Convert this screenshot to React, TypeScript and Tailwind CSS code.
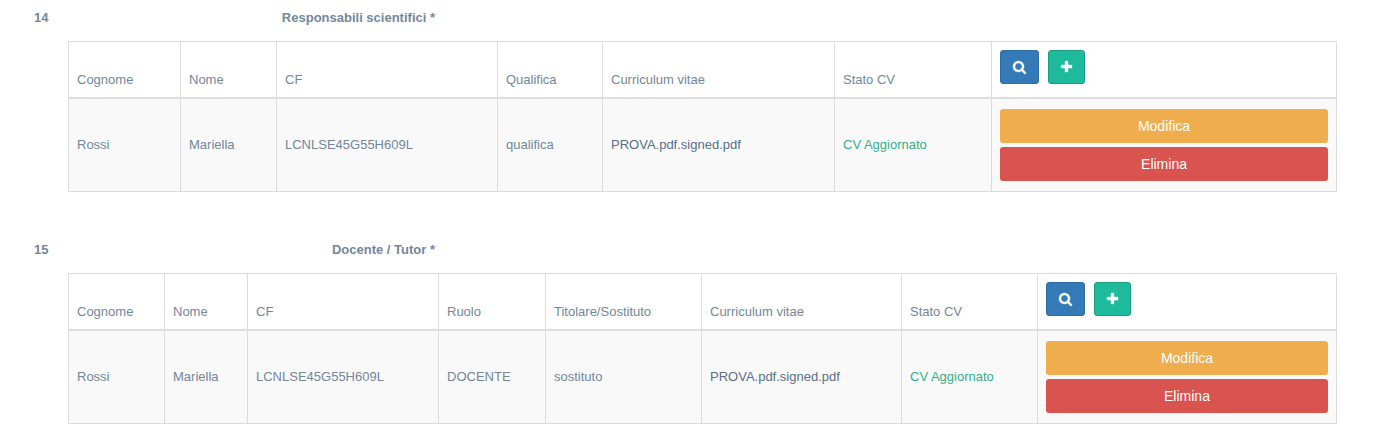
import type { ReactNode } from 'react';

// `size` is the column's share of the table width; the rest goes to the actions column.
type Column = { label: string; value: string; size: number; kind?: 'link' | 'status' };

type Section = { number: string; title: string; columns: Column[]; actionsSize: number };

const sections: Section[] = [
  {
    number: '14',
    title: 'Responsabili scientifici *',
    actionsSize: 345,
    columns: [
      { label: 'Cognome', value: 'Rossi', size: 112 },
      { label: 'Nome', value: 'Mariella', size: 96 },
      { label: 'CF', value: 'LCNLSE45G55H609L', size: 221 },
      { label: 'Qualifica', value: 'qualifica', size: 105 },
      { label: 'Curriculum vitae', value: 'PROVA.pdf.signed.pdf', size: 232, kind: 'link' },
      { label: 'Stato CV', value: 'CV Aggiornato', size: 157, kind: 'status' },
    ],
  },
  {
    number: '15',
    title: 'Docente / Tutor *',
    actionsSize: 299,
    columns: [
      { label: 'Cognome', value: 'Rossi', size: 96 },
      { label: 'Nome', value: 'Mariella', size: 83 },
      { label: 'CF', value: 'LCNLSE45G55H609L', size: 191 },
      { label: 'Ruolo', value: 'DOCENTE', size: 107 },
      { label: 'Titolare/Sostituto', value: 'sostituto', size: 156 },
      { label: 'Curriculum vitae', value: 'PROVA.pdf.signed.pdf', size: 200, kind: 'link' },
      { label: 'Stato CV', value: 'CV Aggiornato', size: 136, kind: 'status' },
    ],
  },
];

function SearchIcon() {
  return (
    <svg
      viewBox="64 128 1664 1664"
      className="size-[13px] overflow-visible"
      fill="currentColor"
      stroke="currentColor"
      strokeWidth="50"
      aria-hidden="true"
    >
      <path d="M1216 832q0-185-131.5-316.5t-316.5-131.5-316.5 131.5-131.5 316.5 131.5 316.5 316.5 131.5 316.5-131.5 131.5-316.5zm512 832q0 52-38 90t-90 38q-54 0-90-38l-343-342q-179 124-399 124-143 0-273.5-55.5t-225-150-150-225-55.5-273.5 55.5-273.5 150-225 225-150 273.5-55.5 273.5 55.5 225 150 150 225 55.5 273.5q0 220-124 399l343 343q37 37 37 90z" />
    </svg>
  );
}

function PlusIcon() {
  return (
    <svg
      viewBox="192 128 1408 1408"
      className="size-[11px] overflow-visible"
      fill="currentColor"
      stroke="currentColor"
      strokeWidth="50"
      aria-hidden="true"
    >
      <path d="M1600 736v192q0 40-28 68t-68 28h-416v416q0 40-28 68t-68 28h-192q-40 0-68-28t-28-68v-416h-416q-40 0-68-28t-28-68v-192q0-40 28-68t68-28h416v-416q0-40 28-68t68-28h192q40 0 68 28t28 68v416h416q40 0 68 28t28 68z" />
    </svg>
  );
}

function IconButton({ label, color, children }: { label: string; color: string; children: ReactNode }) {
  return (
    <button
      type="button"
      aria-label={label}
      className={`flex h-[34px] items-start rounded-[3px] border px-3 pt-[10px] text-white ${color}`}
    >
      {children}
    </button>
  );
}

function ActionButton({ color, children }: { color: string; children: ReactNode }) {
  return (
    <button type="button" className={`h-[34px] w-full rounded-[3px] px-3 text-sm text-white ${color}`}>
      {children}
    </button>
  );
}

function CellValue({ column }: { column: Column }) {
  if (column.kind === 'link') {
    return (
      <a href="#" className="text-[#5a6f88]">
        {column.value}
      </a>
    );
  }
  if (column.kind === 'status') {
    return <span className="text-[#36af8c]">{column.value}</span>;
  }
  return <>{column.value}</>;
}

function PeopleSection({ number, title, columns, actionsSize }: Section) {
  const total = columns.reduce((sum, column) => sum + column.size, actionsSize);

  return (
    <section>
      <div className="mb-[14px] flex font-bold">
        <span className="w-[34px]">{number}</span>
        <h2 className="w-[367px] text-right">{title}</h2>
      </div>
      <div className="pr-[50px] pl-[34px]">
        <table className="w-full min-w-[960px] table-fixed border-collapse border border-[#ddd]">
          <colgroup>
            {columns.map((column) => (
              <col key={column.label} style={{ width: `${(column.size / total) * 100}%` }} />
            ))}
            <col />
          </colgroup>
          <thead>
            <tr>
              {columns.map((column) => (
                <th
                  key={column.label}
                  scope="col"
                  className="border border-b-2 border-[#ddd] p-2 text-left align-bottom font-normal"
                >
                  {column.label}
                </th>
              ))}
              <td className="border border-b-2 border-[#ddd] p-2">
                <div className="mb-[5px] flex gap-[9px]">
                  <IconButton label="Cerca" color="border-[#2e6da4] bg-[#337ab7]">
                    <SearchIcon />
                  </IconButton>
                  <IconButton label="Aggiungi" color="border-[#1d9d80] bg-[#1dbb9b]">
                    <PlusIcon />
                  </IconButton>
                </div>
              </td>
            </tr>
          </thead>
          <tbody>
            <tr className="bg-[#f9f9f9]">
              {columns.map((column) => (
                <td key={column.label} className="border border-[#ddd] px-2 pt-2 pb-[10px]">
                  <CellValue column={column} />
                </td>
              ))}
              <td className="border border-[#ddd] px-2 py-[10px]">
                <div className="flex flex-col gap-1">
                  <ActionButton color="bg-[#f0ad4e]">Modifica</ActionButton>
                  <ActionButton color="bg-[#d9534f]">Elimina</ActionButton>
                </div>
              </td>
            </tr>
          </tbody>
        </table>
      </div>
    </section>
  );
}

export default function App() {
  return (
    <main className="flex flex-col gap-12 bg-white pt-2 pb-4 pl-[34px] font-['Liberation_Sans',Arial,sans-serif] text-[13px] leading-[19px] text-[#73879c]">
      {sections.map((section) => (
        <PeopleSection key={section.number} {...section} />
      ))}
    </main>
  );
}
